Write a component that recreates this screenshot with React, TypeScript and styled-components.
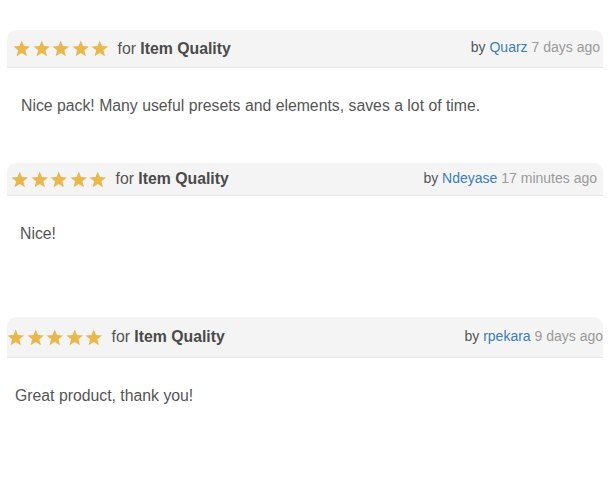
import styled, { createGlobalStyle } from "styled-components";

const GlobalStyle = createGlobalStyle`
  body {
    margin: 0;
    background: #ffffff;
    font-family: "Liberation Sans", Arial, Helvetica, sans-serif;
  }
`;

type Review = {
  id: number;
  rating: number;
  author: string;
  time: string;
  text: string;
  headHeight: number;
  bodyHeight: number;
  indent: number;
  bodyIndent: number;
  rightPad: number;
};

const reviews: Review[] = [
  { id: 1, rating: 5, author: "Quarz", time: "7 days ago", text: "Nice pack! Many useful presets and elements, saves a lot of time.", headHeight: 37, bodyHeight: 95, indent: 6, bodyIndent: 14, rightPad: 3 },
  { id: 2, rating: 5, author: "Ndeyase", time: "17 minutes ago", text: "Nice!", headHeight: 32, bodyHeight: 121, indent: 4, bodyIndent: 13, rightPad: 6 },
  { id: 3, rating: 5, author: "rpekara", time: "9 days ago", text: "Great product, thank you!", headHeight: 40, bodyHeight: 120, indent: 0, bodyIndent: 8, rightPad: 0 },
];

const List = styled.div`
  display: flex;
  flex-direction: column;
  width: 596px;
  padding: 30px 0 0 7px;
`;

const Card = styled.div`
  display: flex;
  flex-direction: column;
`;

const Header = styled.div<{ $height: number; $indent: number; $right: number }>`
  display: flex;
  justify-content: space-between;
  align-items: center;
  height: ${(p) => p.$height}px;
  padding: 0 ${(p) => p.$right}px 0 ${(p) => p.$indent}px;
  background: #f4f4f4;
  border-bottom: 1px solid #e6e7ea;
  border-radius: 9px 9px 0 0;
`;

const Rating = styled.div`
  display: flex;
  align-items: center;
  gap: 9px;
  font-size: 15.8px;
  color: #555555;
`;

const Stars = styled.div`
  display: flex;
  gap: 2px;
`;

const Criteria = styled.b`
  font-weight: 700;
  color: #4a4a4a;
`;

const Meta = styled.div`
  font-size: 14px;
  color: #555555;
  margin-top: -3px;
`;

const Author = styled.a`
  color: #3c7db4;
  text-decoration: none;
`;

const Time = styled.span`
  color: #9a9a9a;
`;

const Body = styled.div<{ $height: number; $indent: number }>`
  height: ${(p) => p.$height}px;
  box-sizing: border-box;
  padding: 28px 0 0 ${(p) => p.$indent}px;
  font-size: 15.8px;
  line-height: 20px;
  color: #555555;
`;

function Star() {
  return (
    <svg width="17.5" height="17" viewBox="0 0 24 23">
      <polygon
        points="12,0.5 15.1,8.2 23.4,8.7 17,14 19.1,22.2 12,17.7 4.9,22.2 7,14 0.6,8.7 8.9,8.2"
        fill="#e8b74e"
      />
    </svg>
  );
}

function App() {
  return (
    <>
      <GlobalStyle />
      <List>
        {reviews.map((r) => (
          <Card key={r.id}>
            <Header $height={r.headHeight} $indent={r.indent} $right={r.rightPad}>
              <Rating>
                <Stars>
                  {Array.from({ length: r.rating }).map((_, i) => (
                    <Star key={i} />
                  ))}
                </Stars>
                <span>
                  for <Criteria>Item Quality</Criteria>
                </span>
              </Rating>
              <Meta>
                by <Author href="#">{r.author}</Author> <Time>{r.time}</Time>
              </Meta>
            </Header>
            <Body $height={r.bodyHeight} $indent={r.bodyIndent}>
              {r.text}
            </Body>
          </Card>
        ))}
      </List>
    </>
  );
}

export default App;
